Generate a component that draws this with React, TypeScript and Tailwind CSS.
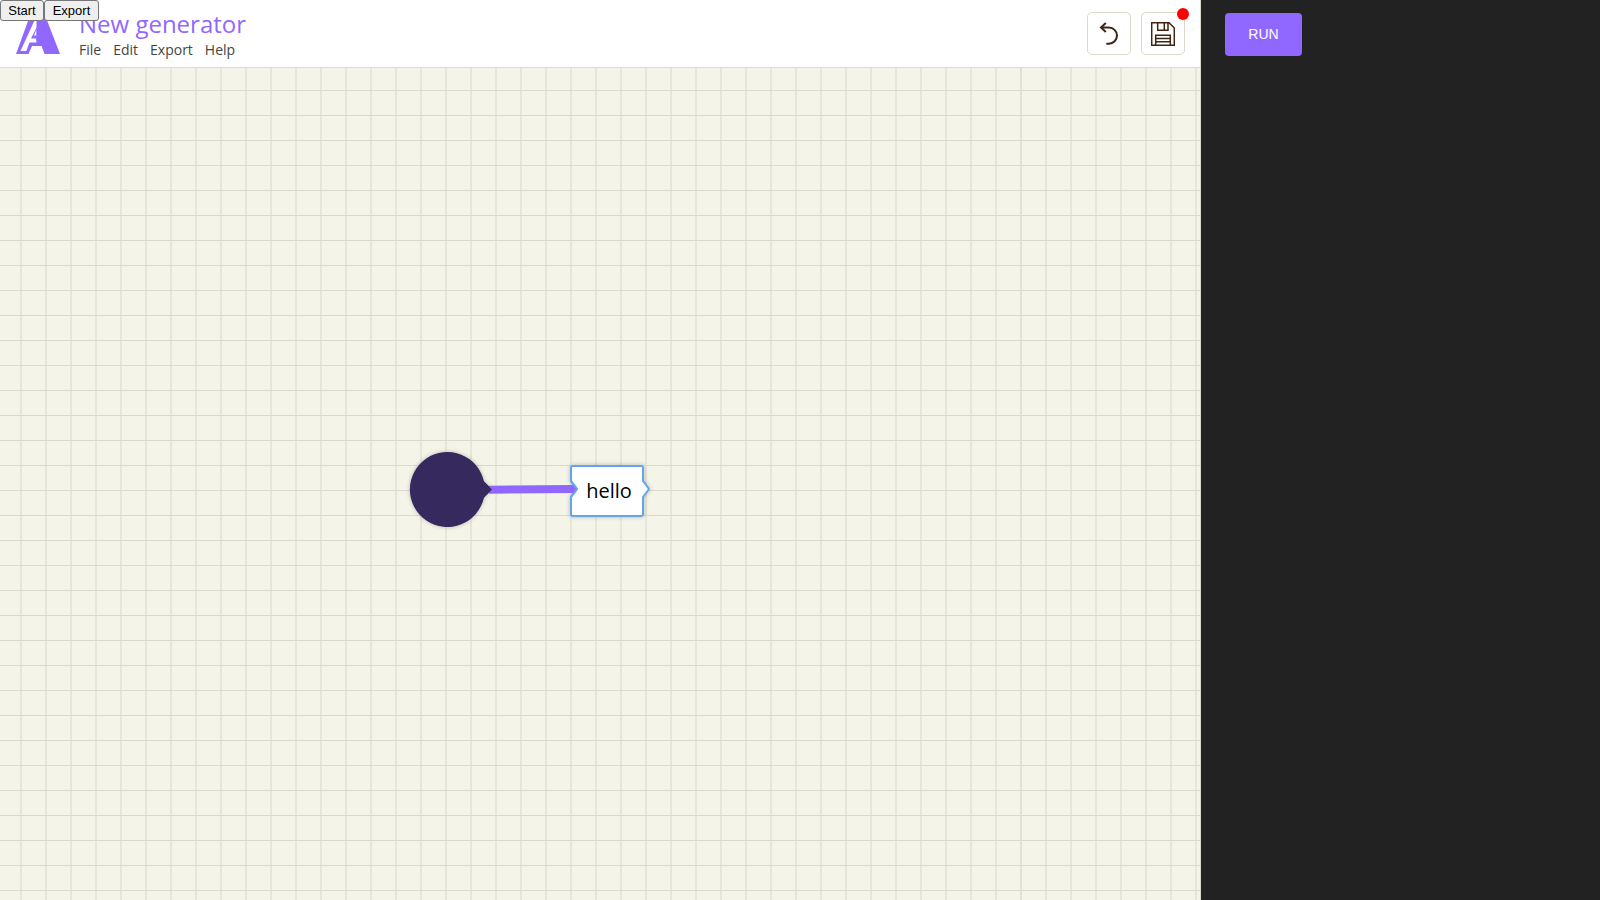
import React from "react";

const menus = ["File", "Edit", "Export", "Help"];

function Logo() {
  return (
    <svg viewBox="0 0 44 44" className="h-11 w-11" aria-hidden="true">
      <path
        fillRule="evenodd"
        fill="#9168ff"
        d="M16 0H27L44 44H28.500L25.500 36H16L12.500 44H0L12 11ZM4.500 41H10.300L13.500 32.500H20.500L20 28.500H15L20.500 17.500V9.500L18 11.500ZM18 25.500H20.300V19.500Z"
      />
    </svg>
  );
}

function UndoIcon() {
  return (
    <svg viewBox="0 0 20 24" className="h-6 w-5" fill="none" stroke="#3f2411" strokeWidth="2" aria-hidden="true">
      <path d="M6.800 1 2 5.500 6.800 10" />
      <path d="M2.200 5.500H9.900A8.100 8.100 0 0 1 9.900 21.700H7.300" />
    </svg>
  );
}

function SaveIcon() {
  return (
    <svg viewBox="0 0 24 24" className="h-6 w-6" fill="none" stroke="#3f2411" strokeWidth="1.500" aria-hidden="true">
      <path d="M0.700 0.700H18L23.300 6V23.300H0.700Z" />
      <path d="M6.700 0.700V8.300H17V0.700M13.300 0.700V8.300" />
      <path d="M4.700 23.300V13.300H19.300V23.300M4.700 16.500H19.300M4.700 19.800H19.300" />
    </svg>
  );
}

function Header() {
  return (
    <header className="flex h-[68px] items-start justify-between border-b border-[#dadada] bg-white pr-[15px]">
      <div className="flex pl-4">
        <div className="pt-[10px]">
          <Logo />
        </div>
        <div className="pl-[19px] pt-2">
          <h1 className="text-[24px] leading-8 text-[#9168ff]">New generator</h1>
          <nav className="flex gap-3 text-[14px] leading-5 text-[#444]">
            {menus.map((m) => (
              <button key={m} type="button">
                {m}
              </button>
            ))}
          </nav>
        </div>
      </div>
      <div className="flex gap-[10px] pt-3">
        <button
          type="button"
          aria-label="Undo"
          className="flex h-[43px] w-11 items-center justify-center rounded-[5px] border border-[#ddd9c9] bg-white"
        >
          <UndoIcon />
        </button>
        <button
          type="button"
          aria-label="Save"
          className="relative flex h-[43px] w-11 items-center justify-center rounded-[5px] border border-[#ddd9c9] bg-white"
        >
          <SaveIcon />
          <span className="absolute -right-[5px] -top-[5px] h-3 w-3 rounded-full bg-[#ff0000]" />
        </button>
      </div>
    </header>
  );
}

function Canvas() {
  return (
    <main className="relative flex-1 overflow-hidden bg-[#f5f4e8]">
      <div className="absolute inset-0 bg-[linear-gradient(to_right,#e7e7d9_2px,transparent_2px)] bg-[length:25px_25px] bg-[position:20px_0px]" />
      <div className="absolute inset-y-0 left-[1020px] w-[2px] bg-[#e1e1d1]" />
      <div className="absolute inset-0 bg-[linear-gradient(to_bottom,#dadaca_1px,transparent_1px)] bg-[length:25px_25px] bg-[position:0px_22px]" />
      <svg viewBox="0 0 260 90" className="absolute left-[400px] top-[376px] h-[90px] w-[260px]" aria-hidden="true">
        <path
          className="drop-shadow-[0_0_2px_rgba(0,0,0,0.25)]"
          fill="#35295e"
          d="M84 37.500 92 45.500 84 53.500A37.500 37.500 0 1 1 84 37.500Z"
        />
        <path
          className="drop-shadow-[0_0_2px_rgba(0,0,0,0.25)]"
          fill="#fff"
          stroke="#62a5ee"
          strokeWidth="2"
          strokeLinejoin="round"
          d="M173 22H241Q243 22 243 24V37L249 45 243 53V70Q243 72 241 72H173Q171 72 171 70V53L177 45 171 37V24Q171 22 173 22Z"
        />
        <path stroke="#9168ff" strokeWidth="8" d="M89 45.800 173 45" />
        <path fill="#9168ff" d="M171 41H173.500L176.500 45 173.500 49H171Z" />
        <path fill="#35295e" d="M83 36.500 92 45.500 83 54.500Z" />
        <path fill="none" stroke="#62a5ee" strokeWidth="2" d="M171 37 177 45 171 53" />
      </svg>
      <div className="absolute left-[571px] top-[398px] flex h-[50px] w-[76px] items-center justify-center text-[20px] leading-6 text-black">
        hello
      </div>
    </main>
  );
}

export default function App() {
  return (
    <div className="relative flex min-h-screen font-['Open_Sans','Noto_Sans',sans-serif]">
      <section className="flex w-3/4 flex-col">
        <Header />
        <Canvas />
      </section>
      <aside className="flex flex-1 items-start border-l border-[#dadaca] bg-[#222] pl-6 pt-[13px]">
        <button
          type="button"
          className="h-[43px] w-[77px] rounded-[4px] bg-[#9168ff] font-['Liberation_Sans',sans-serif] text-[14px] text-white"
        >
          RUN
        </button>
      </aside>
      <div className="absolute left-0 top-0 flex font-['Liberation_Sans',sans-serif] text-[13px] leading-[15px] text-black">
        <button type="button" className="h-[21px] w-11 rounded-[3px] border border-[#767676] bg-[#efefef]">
          Start
        </button>
        <button type="button" className="h-[21px] w-[55px] rounded-[3px] border border-[#767676] bg-[#efefef]">
          Export
        </button>
      </div>
    </div>
  );
}
